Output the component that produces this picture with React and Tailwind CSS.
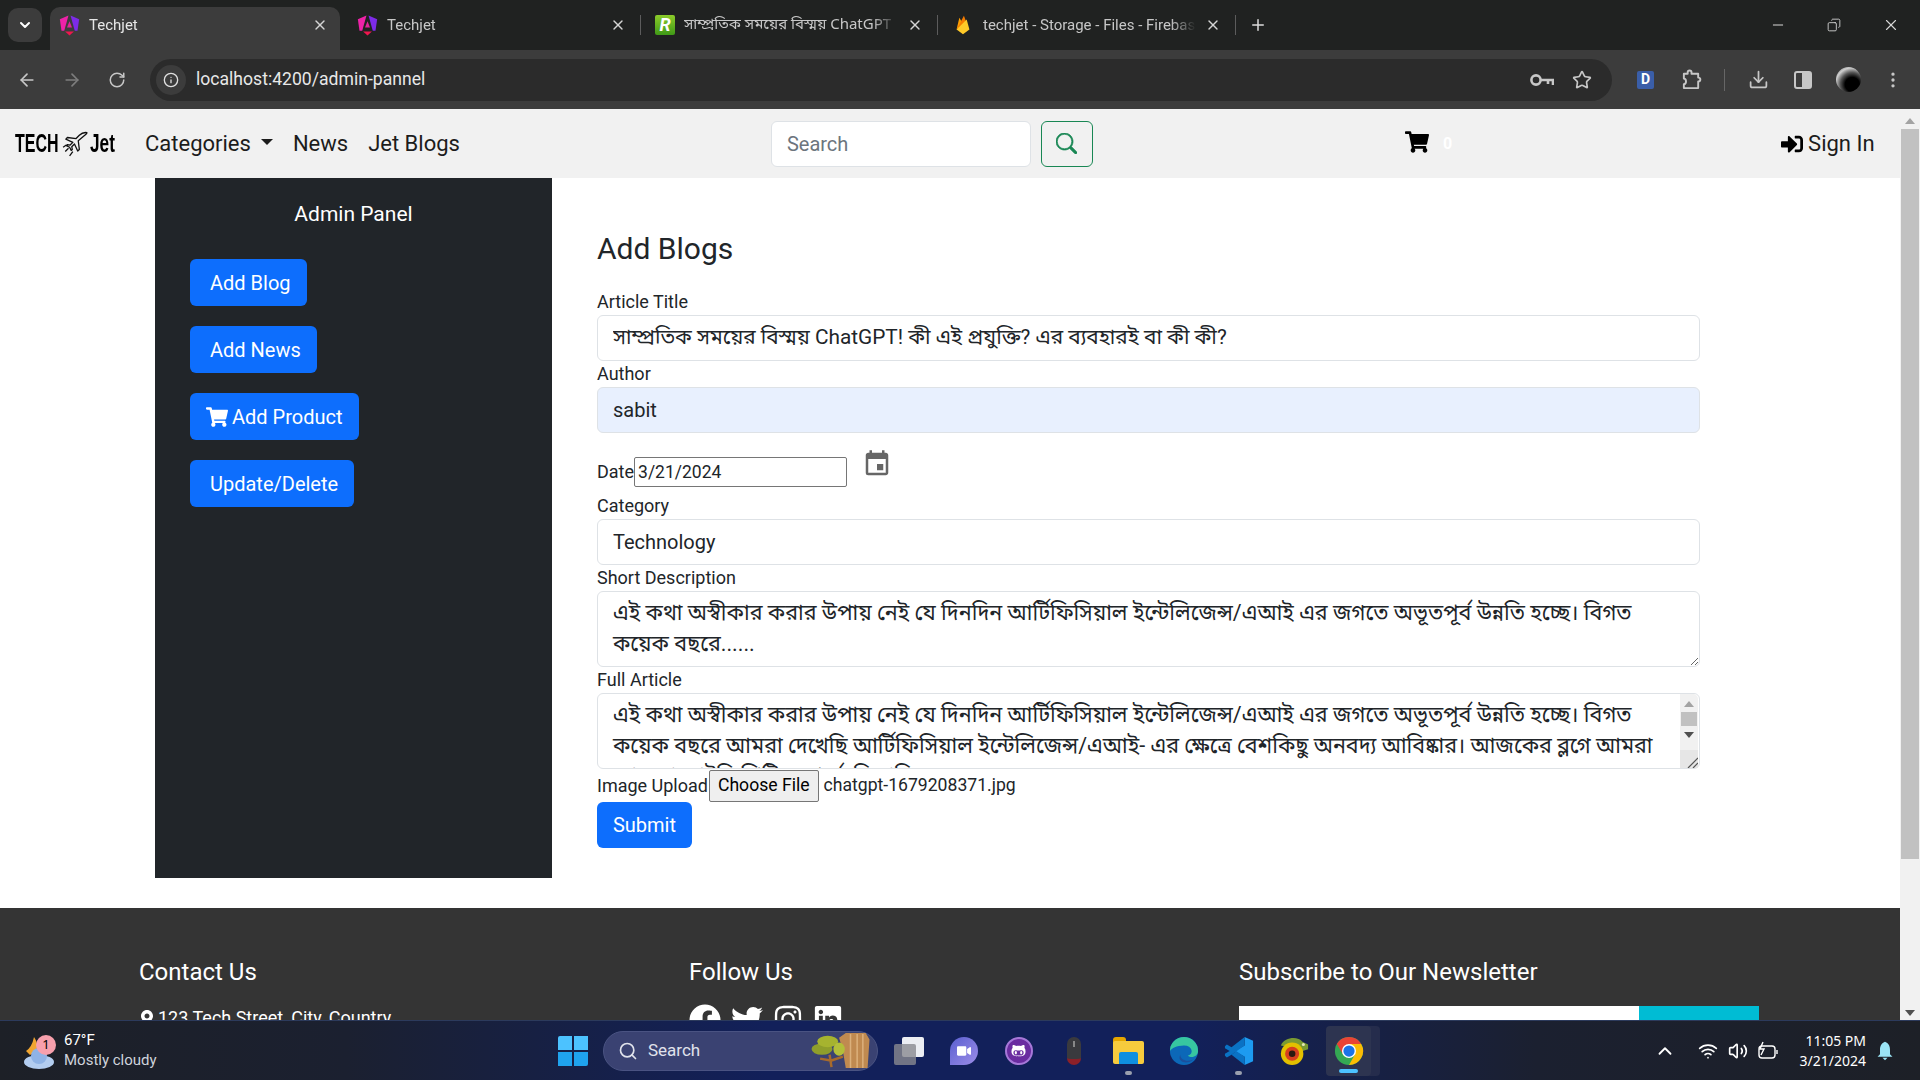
import { useState } from 'react';
import { ArrowLeft, ArrowRight, RotateCw, Info, Star, Download, EllipsisVertical, ChevronDown, X, Plus, Minus, Copy, Search, ChevronUp, Wifi, Volume2 } from 'lucide-react';
import { FaShoppingCart, FaSignInAlt, FaFacebook, FaTwitter, FaInstagram, FaLinkedin, FaMapMarkerAlt, FaGithubAlt, FaVideo } from 'react-icons/fa';
import { BsSearch } from 'react-icons/bs';
import { MdEvent } from 'react-icons/md';

const FONT = "font-['Roboto','Noto_Sans_Bengali','Lohit_Bengali','Noto_Sans',sans-serif]";
const BN = "font-['Noto_Sans_Bengali','Lohit_Bengali','Noto_Sans','Roboto',sans-serif]";

const titleText = 'সাম্প্রতিক সময়ের বিস্ময় ChatGPT! কী এই প্রযুক্তি? এর ব্যবহারই বা কী কী?';
const shortText = 'এই কথা অস্বীকার করার উপায় নেই যে দিনদিন আর্টিফিসিয়াল ইন্টেলিজেন্স/এআই এর জগতে অভূতপূর্ব উন্নতি হচ্ছে। বিগত কয়েক বছরে......';
const fullText = 'এই কথা অস্বীকার করার উপায় নেই যে দিনদিন আর্টিফিসিয়াল ইন্টেলিজেন্স/এআই এর জগতে অভূতপূর্ব উন্নতি হচ্ছে। বিগত কয়েক বছরে আমরা দেখেছি আর্টিফিসিয়াল ইন্টেলিজেন্স/এআই- এর ক্ষেত্রে বেশকিছু অনবদ্য আবিষ্কার। আজকের ব্লগে আমরা জানবো চ্যাটজিপিটি সম্পর্কে বিস্তারিত।';

function AngularIcon() {
  return (
    <svg viewBox="0 0 20 20" className="w-[21px] h-[21px] shrink-0">
      <path d="M9 .5 L.8 4 L2.4 15 L5 15 Z" fill="#ee22a8" />
      <path d="M11 .5 L19.2 4 L17.6 15 L15 15 Z" fill="#7d2be8" />
      <path d="M10 6 L12.4 12 H7.6 Z" fill="#e0249a" />
      <path d="M5.8 15.6 H14.2 L10 19.5 Z" fill="#f0164f" />
    </svg>
  );
}

function Tab({ icon, title, active, width, sep }) {
  return (
    <div className={`relative h-[43px] flex items-center gap-[9px] pl-[9px] pr-[12px] pb-[7px] shrink-0 ${active ? 'bg-[#3c3c3c] rounded-t-[10px] text-[#e6e6e6]' : 'text-[#c7c7c7]'} ${width}`}>
      {icon}
      <span className="flex-1 min-w-0 whitespace-nowrap overflow-hidden text-[15px] [mask-image:linear-gradient(to_right,black_88%,transparent)]">{title}</span>
      <X size={16} className="shrink-0 text-[#d5d5d5]" />
      {sep && <span className="absolute right-[-3px] top-[8px] h-[20px] w-px bg-[#5c5c5c]" />}
    </div>
  );
}

function TabStrip() {
  return (
    <div className="h-[50px] bg-[#202221] flex items-end pl-[8px] shrink-0">
      <div className="self-start mt-[8px] w-[34px] h-[34px] rounded-[10px] bg-[#3c3c3c] flex items-center justify-center text-white mr-[8px]">
        <ChevronDown size={16} strokeWidth={3} />
      </div>
      <Tab active icon={<AngularIcon />} title="Techjet" width="w-[290px]" />
      <Tab icon={<span className="ml-[8px]"><AngularIcon /></span>} title="Techjet" width="w-[298px]" sep />
      <Tab
        icon={<span className="ml-[8px] w-[20px] h-[20px] rounded-[2px] bg-[linear-gradient(180deg,#8ccb2a,#3f9a17)] text-white font-bold italic text-[18px] leading-[20px] text-center shrink-0">R</span>}
        title={<span className={BN}>সাম্প্রতিক সময়ের বিস্ময় ChatGPT</span>}
        width="w-[297px]"
        sep
      />
      <Tab
        icon={
          <svg viewBox="0 0 24 24" className="ml-[8px] w-[22px] h-[22px] shrink-0">
            <path d="M5 17 L8 4 L11 9 Z" fill="#ffa000" />
            <path d="M5 17 L13 2 L16 10 Z" fill="#f57c00" />
            <path d="M5 17 L16 6 L19 17 L12 22 Z" fill="#ffca28" />
          </svg>
        }
        title="techjet - Storage - Files - Firebase"
        width="w-[298px]"
        sep
      />
      <div className="h-[43px] flex items-center pb-[7px] ml-[16px] text-[#dcdcdc]"><Plus size={18} /></div>
      <div className="flex-1" />
      <div className="self-start h-[50px] flex items-center gap-[41px] pr-[20px] text-[#d8d8d8]">
        <Minus size={16} strokeWidth={1.5} />
        <Copy size={14} strokeWidth={1.5} className="-scale-x-100" />
        <X size={18} strokeWidth={1.5} />
      </div>
    </div>
  );
}

function Toolbar() {
  return (
    <div className="h-[59px] bg-[#3c3c3c] flex items-center shrink-0 text-[#c7c7c7]">
      <div className="w-[150px] flex items-center gap-[25px] pl-[17px] shrink-0">
        <ArrowLeft size={20} />
        <ArrowRight size={20} className="text-[#7d7d7d]" />
        <RotateCw size={18} className="ml-[1px]" />
      </div>
      <div className="w-[1462px] h-[42px] rounded-full bg-[#2b2b2b] flex items-center pl-[6px] pr-[20px] shrink-0">
        <div className="w-[30px] h-[30px] rounded-full bg-[#3c3c3c] flex items-center justify-center text-[#e0e0e0]"><Info size={16} /></div>
        <span className="ml-[10px] text-[17.6px] text-[#e8e8e8] flex-1">localhost:4200/admin-pannel</span>
        <svg viewBox="0 0 24 14" className="w-[24px] h-[14px]" fill="none" stroke="#c7c7c7" strokeWidth="2.6">
          <circle cx="6" cy="7" r="4.6" />
          <path d="M10.6 7 H23 V12 M18 7 V11" />
        </svg>
        <Star size={20} className="ml-[18px]" />
      </div>
      <div className="flex items-center flex-1 pl-[25px]">
        <span className="w-[17px] h-[18px] rounded-[2px] bg-[#3a5ea8] text-white text-[14px] font-bold flex items-center justify-center">D</span>
        <svg viewBox="0 0 22 22" className="ml-[27px] w-[21px] h-[21px]" fill="none" stroke="#c7c7c7" strokeWidth="2" strokeLinejoin="round">
          <path d="M3 5 H7 V3.5 C7 1 11 1 11 3.5 V5 H18 V9 C21 9 21 13 18 13 V20 H3 V16 C6 15.5 6 10.5 3 10 Z" />
        </svg>
        <span className="ml-[22px] w-px h-[22px] bg-[#666]" />
        <Download size={21} className="ml-[23px]" />
        <span className="ml-[25px] w-[18px] h-[18px] border-[2px] border-[#c7c7c7] rounded-[3px] flex justify-end"><span className="w-[8px] bg-[#c7c7c7]" /></span>
        <span className="ml-[24px] w-[25px] h-[25px] rounded-full bg-[radial-gradient(circle_at_65%_70%,#000_0%,#000_30%,#555_50%,#cfcfcf_70%,#555_100%)]" />
        <EllipsisVertical size={20} className="ml-[22px]" />
      </div>
    </div>
  );
}

function Navbar() {
  return (
    <nav className="h-[69px] bg-[#f1f1f1] flex items-center shrink-0 text-[22px] text-[#1c1c1c]">
      <div className="ml-[15px] w-[115px] flex items-center font-['Liberation_Sans',sans-serif] font-bold text-[25px] text-black whitespace-nowrap">
        <span className="w-[47px] scale-x-[0.64] origin-left">TECH</span>
        <svg viewBox="0 0 24 24" className="w-[26px] h-[26px] shrink-0" fill="none" stroke="#111" strokeWidth="1.2" strokeLinejoin="round">
          <path d="M23 1.5 C20 1 18 2 16 4 L13 7 L5 6 L3.5 7.5 L10 10.5 L7.5 13 L5 12.5 L4 13.5 L7 15 L8.5 18 L9.5 17 L9 14.5 L11.5 12 L14.5 18.5 L16 17 L15 9 L21 4 C22 3 23 2.5 23 1.5 Z" />
          <path d="M3 19 L6 16 M7 23 L10 19 M1 15 L4 13" />
        </svg>
        <span className="ml-[2px] scale-x-[0.69] origin-left">Jet</span>
      </div>
      <span className="ml-[15px] flex items-center">Categories<span className="ml-[10px] mb-[4px] border-x-[6px] border-x-transparent border-t-[6px] border-t-[#1c1c1c]" /></span>
      <span className="ml-[20px]">News</span>
      <span className="ml-[20px]">Jet Blogs</span>
      <div className="ml-[311px] w-[260px] h-[46px] bg-white border border-[#dee2e6] rounded-[6px] flex items-center pl-[15px] text-[#6c757d] text-[20px]">Search</div>
      <div className="ml-[10px] w-[52px] h-[46px] border border-[#198754] rounded-[6px] flex items-center justify-center text-[#198754]"><BsSearch size={21} strokeWidth={0.5} /></div>
      <FaShoppingCart size={24} className="ml-[312px] text-black -mt-[4px]" />
      <span className="ml-[14px] text-white text-[16px] font-bold">0</span>
      <FaSignInAlt size={22} className="ml-[329px] text-black" />
      <span className="ml-[5px]">Sign In</span>
    </nav>
  );
}

function SideButton({ children }) {
  return (
    <button className="h-[47px] pl-[20px] pr-[16px] rounded-[6px] bg-[#0d6efd] text-white text-[20px] flex items-center self-start whitespace-nowrap">
      {children}
    </button>
  );
}

function Sidebar() {
  return (
    <aside className="w-[397px] h-[700px] bg-[#212529] shrink-0 px-[35px] pt-[23px]">
      <div className="text-white text-[21px] font-normal text-center leading-[26px]">Admin Panel</div>
      <div className="flex flex-col gap-[20px] mt-[32px]">
        <SideButton>Add Blog</SideButton>
        <SideButton>Add News</SideButton>
        <button className="h-[47px] pl-[16px] pr-[16px] rounded-[6px] bg-[#0d6efd] text-white text-[20px] flex items-center self-start whitespace-nowrap">
          <FaShoppingCart size={22} className="mr-[4px]" />Add Product
        </button>
        <SideButton>Update/Delete</SideButton>
      </div>
    </aside>
  );
}

const labelCls = 'block text-[18px] leading-[26px] text-[#212529] h-[26px]';
const controlCls = `block w-full h-[46px] border border-[#dee2e6] rounded-[6px] px-[15px] text-[#212529] outline-none ${FONT}`;
const areaCls = `block w-full h-[76px] border border-[#dee2e6] rounded-[6px] pl-[15px] pr-[30px] py-[6px] text-[21.5px] leading-[30.6px] text-[#212529] outline-none resize-y overflow-hidden ${FONT}`;

function AddBlogForm() {
  const [title, setTitle] = useState(titleText);
  const [author, setAuthor] = useState('sabit');
  const [date, setDate] = useState('3/21/2024');
  const [category, setCategory] = useState('Technology');
  const [short, setShort] = useState(shortText);
  const [full, setFull] = useState(fullText);

  return (
    <section className="w-[1103px] ml-[45px] pt-[53px]">
      <h2 className="text-[30px] leading-[36px] font-normal text-[#212529] mb-[22px]">Add Blogs</h2>
      <label className={labelCls}>Article Title</label>
      <input className={`${controlCls} text-[20.8px] bg-white`} value={title} onChange={(e) => setTitle(e.target.value)} />
      <label className={labelCls}>Author</label>
      <input className={`${controlCls} text-[20px] bg-[#e8f0fe]`} value={author} onChange={(e) => setAuthor(e.target.value)} />
      <div className="h-[60px] flex items-start pt-[24px]">
        <span className="text-[18px] leading-[30px] text-[#212529]">Date</span>
        <input className="w-[213px] h-[30px] border border-[#767676] rounded-[2px] px-[3px] text-[17.5px] text-[#212529] outline-none" value={date} onChange={(e) => setDate(e.target.value)} />
        <MdEvent size={30} className="ml-[15px] -mt-[8px] text-[#666]" />
      </div>
      <label className={labelCls}>Category</label>
      <input className={`${controlCls} text-[20px] bg-white`} value={category} onChange={(e) => setCategory(e.target.value)} />
      <label className={labelCls}>Short Description</label>
      <textarea className={areaCls} value={short} onChange={(e) => setShort(e.target.value)} />
      <label className={labelCls}>Full Article</label>
      <div className="relative">
        <textarea className={areaCls} value={full} onChange={(e) => setFull(e.target.value)} />
        <div className="absolute right-[2px] top-[1px] bottom-[1px] w-[18px] bg-[#f1f1f1] flex flex-col items-center rounded-tr-[5px]">
          <span className="mt-[7px] border-x-[5px] border-x-transparent border-b-[6px] border-b-[#a3a3a3]" />
          <span className="mt-[5px] w-[16px] h-[14px] bg-[#c1c1c1]" />
          <span className="mt-[6px] border-x-[5px] border-x-transparent border-t-[6px] border-t-[#505050]" />
          <span className="mt-auto w-full h-[18px] bg-[#e6e6e6] flex items-end justify-end">
            <svg viewBox="0 0 12 12" className="w-[12px] h-[12px]" stroke="#555" strokeWidth="1.2">
              <path d="M2 12 L12 2 M7 12 L12 7" />
            </svg>
          </span>
        </div>
      </div>
      <div className="h-[33px] flex items-center text-[18px] text-[#212529]">
        <span>Image Upload</span>
        <button className="ml-[1px] h-[32px] px-[8px] border border-[#767676] rounded-[2px] bg-[#efefef] text-black text-[17.6px] mr-[5px]">Choose File</button>
        <span className="text-[17.6px]">chatgpt-1679208371.jpg</span>
      </div>
      <button className="block h-[46px] w-[95px] rounded-[6px] bg-[#0d6efd] text-white text-[20px]">Submit</button>
    </section>
  );
}

function Footer() {
  return (
    <footer className="mt-[30px] bg-[#343434] text-white pt-[48px] pl-[139px] pb-[60px] grid grid-cols-[550px_550px_520px]">
      <div>
        <h3 className="text-[24px] leading-[32px] font-normal">Contact Us</h3>
        <p className="mt-[16px] text-[18px] flex items-center gap-[3px]"><FaMapMarkerAlt size={16} />123 Tech Street, City, Country</p>
      </div>
      <div>
        <h3 className="text-[24px] leading-[32px] font-normal">Follow Us</h3>
        <div className="mt-[16px] flex gap-[10px]">
          <FaFacebook size={32} />
          <FaTwitter size={32} />
          <FaInstagram size={30} />
          <FaLinkedin size={30} />
        </div>
      </div>
      <div>
        <h3 className="text-[24px] leading-[32px] font-normal">Subscribe to Our Newsletter</h3>
        <div className="mt-[18px] flex h-[46px]">
          <div className="w-[400px] bg-white" />
          <div className="w-[120px] bg-[#00bcd4]" />
        </div>
      </div>
    </footer>
  );
}

function PageScrollbar() {
  return (
    <div className="w-[20px] bg-[#f1f1f1] shrink-0 flex flex-col items-center">
      <span className="mt-[9px] border-x-[5px] border-x-transparent border-b-[6px] border-b-[#a3a3a3]" />
      <span className="mt-[5px] w-[18px] h-[730px] bg-[#c1c1c1]" />
      <span className="mt-auto mb-[4px] border-x-[5px] border-x-transparent border-t-[6px] border-t-[#505050]" />
    </div>
  );
}

function ChromeLogo() {
  return (
    <svg viewBox="0 0 32 32" className="w-[30px] h-[30px]">
      <circle cx="16" cy="16" r="15" fill="#34a853" />
      <path d="M16 1 A15 15 0 0 1 29 8.5 L16 8.5 Z M16 1 A15 15 0 0 0 3 8.5 L9.5 19.5 L16 8.5 Z" fill="#ea4335" />
      <path d="M29 8.5 A15 15 0 0 1 16 31 L22.5 19.5 L16 8.5 Z" fill="#fbbc04" />
      <circle cx="16" cy="16" r="7.5" fill="#fff" />
      <circle cx="16" cy="16" r="6" fill="#1a73e8" />
    </svg>
  );
}

function TaskSlot({ children, running }) {
  return (
    <div className="w-[55px] h-[60px] flex items-center justify-center relative shrink-0">
      {children}
      {running && <span className="absolute bottom-[6px] left-[24px] w-[7px] h-[4px] rounded-full bg-[#9a9fae]" />}
    </div>
  );
}

function Taskbar() {
  return (
    <div className="h-[60px] shrink-0 border-t border-[#2c3a5c] bg-[linear-gradient(90deg,#1d2027_0%,#1b2030_18%,#12205a_40%,#12205a_62%,#1b2030_80%,#1d2027_100%)] flex items-center text-white font-['Noto_Sans',sans-serif]">
      <div className="ml-[22px] w-[36px] h-[44px] relative shrink-0">
        <svg viewBox="0 0 36 44" className="w-[36px] h-[44px]">
          <path d="M4 22 Q10 18 12 8 Q20 20 8 26 Z" fill="#f0a530" />
          <ellipse cx="17" cy="33" rx="15" ry="7" fill="#b3cdf0" />
          <circle cx="17" cy="27" r="8" fill="#8fb3e6" />
        </svg>
        <span className="absolute left-[14px] top-[6px] w-[20px] h-[20px] rounded-full bg-[#f7a0ad] text-black text-[13px] flex items-center justify-center">1</span>
      </div>
      <div className="ml-[6px] -mt-[2px] flex flex-col text-[15px] leading-[20px] w-[100px] shrink-0 font-['Roboto',sans-serif]">
        <span>67°F</span>
        <span className="text-[#cfd3dc]">Mostly cloudy</span>
      </div>
      <div className="ml-[394px] w-[30px] h-[30px] grid grid-cols-2 gap-[2px] shrink-0">
        <span className="bg-[#4cc2ff] rounded-tl-[2px]" />
        <span className="bg-[#4cc2ff]" />
        <span className="bg-[#1fa3ee]" />
        <span className="bg-[#1fa3ee] rounded-br-[2px]" />
      </div>
      <div className="ml-[15px] w-[275px] h-[40px] rounded-full bg-[#3a4272] border border-[#4a5382] flex items-center pl-[14px] shrink-0 relative font-['Roboto',sans-serif]">
        <Search size={20} className="text-[#e0e3ec]" />
        <span className="ml-[10px] text-[17px] text-[#e0e3ec]">Search</span>
        <svg viewBox="0 0 64 40" className="absolute right-[4px] top-[0px] w-[64px] h-[38px]">
          <path d="M37 1 H58 L62 8 L60 38 H37 L34 20 L30 6 Z" fill="#c08a50" />
          <path d="M42 2 V38 M49 2 V38 M55 2 V38" stroke="#dbb07b" strokeWidth="1.6" />
          <path d="M20 24 L22 37 M21 30 L10 28 M22 30 L34 26" stroke="#a76a2c" strokeWidth="2.6" fill="none" />
          <ellipse cx="12" cy="18" rx="11" ry="6" fill="#8f9e2b" />
          <ellipse cx="18" cy="10" rx="11" ry="6" fill="#a6b32f" />
          <ellipse cx="30" cy="18" rx="6" ry="7" fill="#b3bf3a" />
        </svg>
      </div>
      <div className="ml-[3px] flex shrink-0">
        <TaskSlot>
          <div className="w-[30px] h-[28px] relative">
            <span className="absolute right-0 top-0 w-[22px] h-[20px] bg-[#eceef3] rounded-[2px]" />
            <span className="absolute left-0 bottom-0 w-[22px] h-[21px] bg-[#8a8a90]/80 rounded-[2px]" />
          </div>
        </TaskSlot>
        <TaskSlot>
          <span className="w-[28px] h-[28px] rounded-full rounded-bl-[4px] bg-[linear-gradient(135deg,#5a5fd0,#9c8de8)] flex items-center justify-center"><FaVideo size={14} className="text-white" /></span>
        </TaskSlot>
        <TaskSlot>
          <span className="w-[28px] h-[28px] rounded-full bg-[#6a2ca0] border-2 border-[#a678d8] flex items-center justify-center"><FaGithubAlt size={15} className="text-white" /></span>
        </TaskSlot>
        <TaskSlot>
          <span className="w-[14px] h-[28px] rounded-[7px] bg-[#3a3a3e] border-b-[6px] border-b-[#8c2028] flex justify-center pt-[4px]"><span className="w-[2px] h-[6px] bg-[#888]" /></span>
        </TaskSlot>
        <TaskSlot running>
          <div className="w-[31px] h-[27px] relative">
            <span className="absolute left-0 top-0 w-[13px] h-[8px] bg-[#e6a600] rounded-t-[3px]" />
            <span className="absolute left-0 top-[4px] w-[31px] h-[23px] bg-[#f7cb3d] rounded-[2px]" />
            <span className="absolute left-[6px] bottom-0 w-[19px] h-[12px] bg-[#0f8fe0] rounded-t-[2px]" />
          </div>
        </TaskSlot>
        <TaskSlot>
          <svg viewBox="0 0 32 32" className="w-[30px] h-[30px]">
            <circle cx="16" cy="16" r="15" fill="#0c68b8" />
            <path d="M1 16 A15 15 0 0 1 31 16 C31 22 24 24 20 21 C27 19 25 10 16 10 C8 10 3 13 1 16 Z" fill="#37c6a0" />
            <path d="M12 20 C12 26 20 28 26 25 C20 31 8 28 12 20 Z" fill="#1b4f9c" />
          </svg>
        </TaskSlot>
        <TaskSlot running>
          <svg viewBox="0 0 32 32" className="w-[30px] h-[30px]">
            <path d="M22 1 L31 5 V27 L22 31 V22 L11 16 L22 10 Z" fill="#1d9bf0" />
            <path d="M22 1 V10 L8 20 L3 23 L1 21 V19 L6 16 L1 13 V11 L3 9 L8 12 Z" fill="#0a72c4" />
            <path d="M8 20 L22 31 V22 L13 16 Z" fill="#0a72c4" />
          </svg>
        </TaskSlot>
        <TaskSlot>
          <svg viewBox="0 0 32 32" className="w-[30px] h-[30px]">
            <path d="M2 10 C6 1 20 0 25 6 L31 9 V14 L22 17 L10 12 Z" fill="#7a9a32" />
            <circle cx="14" cy="19" r="12" fill="#e3c000" />
            <circle cx="14" cy="19" r="7.5" fill="#d6401f" />
            <circle cx="14" cy="19" r="3.5" fill="#2a1a10" />
            <circle cx="26" cy="9" r="1.6" fill="#e6e6b8" />
          </svg>
        </TaskSlot>
        <div className="w-[55px] h-[60px] flex items-center justify-center relative shrink-0">
          <span className="absolute left-[9px] top-[5px] bottom-[5px] w-[50px] rounded-[4px] bg-[#252c4c]" />
          <span className="absolute left-[5px] top-[5px] bottom-[5px] w-[45px] rounded-[4px] bg-[#2d3450]" />
          <span className="relative"><ChromeLogo /></span>
          <span className="absolute bottom-[8px] left-[18px] w-[19px] h-[4px] bg-[#4cc2ff] rounded-full" />
        </div>
      </div>
      <div className="flex-1" />
      <ChevronUp size={22} />
      <span className="ml-[17px] w-[30px] flex justify-center"><Wifi size={20} /></span>
      <span className="w-[30px] flex justify-center"><Volume2 size={20} /></span>
      <span className="w-[30px] flex justify-center">
        <svg viewBox="0 0 22 20" className="w-[22px] h-[20px]" fill="none" stroke="#fff" strokeWidth="1.4">
          <rect x="2" y="5" width="16" height="12" rx="3" />
          <path d="M20 9 V13 M6 1 L3 8 H7 L4 14" />
        </svg>
      </span>
      <div className="ml-[17px] flex flex-col items-end text-[14px] leading-[20px]">
        <span>11:05 PM</span>
        <span>3/21/2024</span>
      </div>
      <svg viewBox="0 0 24 24" className="ml-[9px] mr-[25px] w-[20px] h-[24px]" fill="#9be4f5">
        <path d="M12 1 C7 3 6 7 6 11 V16 L3 19 H21 L18 16 V11 C18 7 17 3 12 1 Z M9 20 H15 L12 23 Z" />
      </svg>
    </div>
  );
}

export default function App() {
  return (
    <div className={`w-[1920px] h-[1080px] flex flex-col overflow-hidden bg-white ${FONT}`}>
      <TabStrip />
      <Toolbar />
      <div className="h-[911px] flex overflow-hidden shrink-0">
        <div className="flex-1 min-w-0 overflow-hidden">
          <Navbar />
          <main className="flex pl-[155px]">
            <Sidebar />
            <AddBlogForm />
          </main>
          <Footer />
        </div>
        <PageScrollbar />
      </div>
      <Taskbar />
    </div>
  );
}
